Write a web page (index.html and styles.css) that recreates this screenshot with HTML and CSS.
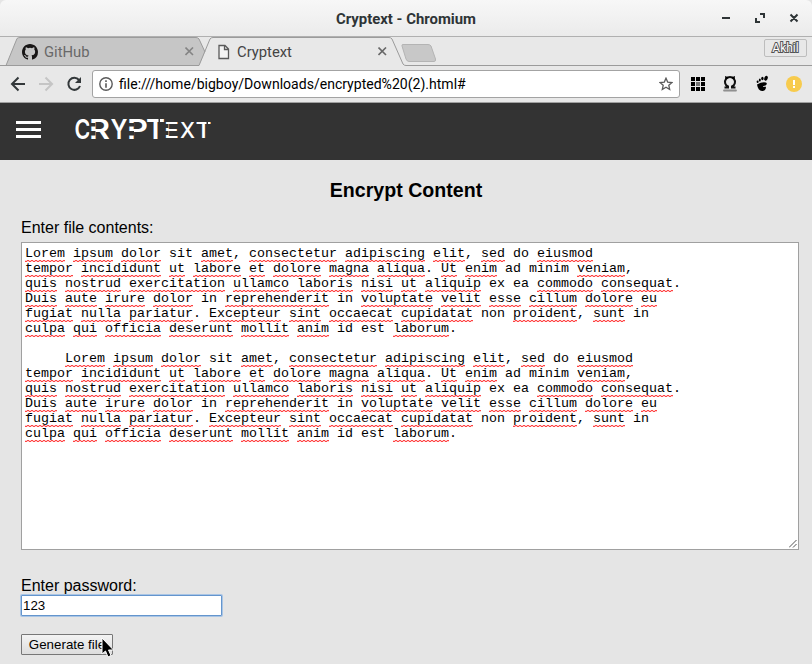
FILE: index.html
```html
<!DOCTYPE html>
<html lang="en">
<head>
<meta charset="utf-8">
<title>Cryptext</title>
<link rel="stylesheet" href="styles.css">
</head>
<body>
<div class="window">
  <header class="titlebar">
    <span class="title">Cryptext - Chromium</span>
    <svg class="controls" width="84" height="20" viewBox="0 0 84 20"><g fill="none" stroke="#2e3436" stroke-width="2"><path d="M4 10H12"/><path d="M38 10V14H42M42 6H46V10M72.500 6.500L79.500 13.500M79.500 6.500L72.500 13.500"/></g></svg>
  </header>
  <div class="tabs">
    <svg class="tabshape" width="812" height="29" viewBox="0 0 812 29"><path d="M6 28.500L17 1.500Q18 .5 20 .5H196Q198 .5 199 2L205 15L199 28.500Z" fill="#c6c6c6"/><path d="M0 28.500H6L17 1.500Q18 .5 20 .5H196Q198 .5 199 2L205 15M6 28.500H199L210 2Q211 .5 213 .5H389Q391 .5 392 2L403 27Q404 28.500 406 28.500H812" fill="none" stroke="#9b9b9b"/><path d="M403 7.5H428Q430 7.5 431 9L435.500 22Q436 24.500 434 24.500H409Q407 24.500 406 22L402 9Q401.500 7.500 403 7.500Z" fill="#c8c8c8" stroke="#b4b4b4"/></svg>
    <div class="tab tab-github">
      <svg class="favicon" width="16" height="16" viewBox="0 0 16 16"><path fill="#181616" d="M8 0C3.580 0 0 3.580 0 8c0 3.540 2.290 6.530 5.470 7.590.4.070.55-.17.55-.38v-1.490c-2.010.37-2.530-.49-2.690-.94-.09-.23-.48-.94-.82-1.130-.28-.15-.68-.52-.01-.53.63-.01 1.080.58 1.230.82.72 1.210 1.870.87 2.330.66.07-.52.28-.87.51-1.070-1.780-.2-3.640-.89-3.640-3.950 0-.87.310-1.590.82-2.150-.08-.2-.36-1.020.08-2.120 0 0 .67-.21 2.200.82a7.600 7.600 0 0 1 4 0c1.530-1.040 2.200-.82 2.200-.82.44 1.100.16 1.920.08 2.120.51.56.82 1.270.82 2.150 0 3.070-1.870 3.750-3.650 3.950.29.25.54.73.54 1.480v2.200c0 .21.15.46.55.38A8 8 0 0 0 16 8c0-4.420-3.580-8-8-8Z"/></svg>
      <span>GitHub</span><svg class="close" width="9" height="9" viewBox="0 0 9 9"><path d="M.5.5L8 8M8 .5L.5 8"/></svg>
    </div>
    <div class="tab tab-page">
      <svg class="favicon" width="12" height="16" viewBox="0 0 12 16"><path d="M1 1.500H7L10.500 5V14.500H1ZM6.500 1.500V5.500H10.500" fill="#f4f4f4" stroke="#5a5a5a" stroke-width="1.300"/></svg>
      <span>Cryptext</span><svg class="close dark" width="9" height="9" viewBox="0 0 9 9"><path d="M.5.5L8 8M8 .5L.5 8"/></svg>
    </div>
    <span class="profile">Akhil</span>
  </div>
  <div class="toolbar">
    <svg class="nav" width="92" height="36" viewBox="0 0 92 36"><g fill="none" stroke="#33383a" stroke-width="2"><path d="M25 18H12M18.500 11.500L12 18L18.500 24.500"/><path stroke="#c5c5c5" d="M39 18H52M45.500 11.500L52 18L45.500 24.500"/><path d="M79 14A6 6 0 1 0 80 20"/></g><path fill="#33383a" d="M81 11V17H75Z"/></svg>
    <div class="omnibox">
      <svg width="14" height="14" viewBox="0 0 14 14"><circle cx="7" cy="7" r="6.200" fill="none" stroke="#5a5a5a" stroke-width="1.400"/><path d="M6.200 3.300H7.800V5H6.200ZM6.200 6.200H7.800V10.700H6.200Z" fill="#5a5a5a"/></svg>
      <span class="url">file:///home/bigboy/Downloads/encrypted%20(2).html#</span>
      <svg class="star" width="14" height="14" viewBox="0 0 14 14"><path d="M7 1.200L8.700 5.100L13 5.500L9.800 8.300L10.700 12.500L7 10.300L3.300 12.500L4.200 8.300L1 5.500L5.300 5.100Z" fill="none" stroke="#5a5a5a" stroke-width="1.300"/></svg>
    </div>
    <svg class="extensions" width="132" height="36" viewBox="0 0 132 36"><path d="M11 11h4v4h-4zM16 11h4v4h-4zM21 11h4v4h-4zM11 16h4v4h-4zM21 16h4v4h-4zM11 21h4v4h-4zM16 21h4v4h-4zM21 21h4v4h-4z"/><path fill="#777" d="M16 16h4v4h-4z"/><path d="M44.500 21.500H48V20.500A5 5 0 1 1 52 20.500V21.500H55.500" fill="none" stroke="#111" stroke-width="2"/><path d="M45 10L49 11.500L45.500 14ZM55 10L51 11.500L54.500 14Z"/><path d="M43.500 24.500H56.500" stroke="#aaa" stroke-width="2.500"/><path d="M43.500 24.500H56.500" stroke="#777" stroke-dasharray="1 1"/><g><ellipse cx="86" cy="12.300" rx="1.700" ry="2.500" transform="rotate(25 86 12.300)"/><ellipse cx="82.400" cy="12.500" rx="1.200" ry="1.700"/><ellipse cx="79.800" cy="14" rx="1" ry="1.500"/><ellipse cx="77.600" cy="15.800" rx="1" ry="1.300"/><path d="M77 18.500Q82 15.500 86 16.500Q88 18 85.500 19.500Q82.500 20 83 21Q84.500 20.500 86 20.800Q86 25 82 25Q78 24.500 77 18.500Z"/></g><circle cx="114" cy="18" r="8" fill="#f7cb4d"/><path d="M113 14h2v5h-2zM113 20h2v2h-2z" fill="#fff"/></svg>
  </div>
  <nav class="appbar">
    <div class="menu"><i></i><i></i><i></i></div>
    <svg class="logo" width="144" height="32" viewBox="0 0 144 32">
      <g class="big"><text x="0.500" y="23" textLength="16" lengthAdjust="spacingAndGlyphs">C</text><text x="15" y="23" textLength="21" lengthAdjust="spacingAndGlyphs">R</text><text x="36.500" y="23" textLength="17" lengthAdjust="spacingAndGlyphs">Y</text><text x="53" y="23" textLength="21" lengthAdjust="spacingAndGlyphs">P</text><text x="72" y="23" textLength="19" lengthAdjust="spacingAndGlyphs">T</text></g>
      <g class="small"><text x="90" y="21.500" textLength="15" lengthAdjust="spacingAndGlyphs">E</text><text x="106" y="21.500" textLength="15" lengthAdjust="spacingAndGlyphs">X</text><text x="121.500" y="21.500" textLength="16" lengthAdjust="spacingAndGlyphs">T</text></g>
      <path fill="#333" d="M15.500 7h6v3.500h-6zM15.500 15h6v4.500h-6zM54 7h6v3.500h-6zM54 15h6v4.500h-6zM84.500 3h1.500v5h-1.500zM90 8h4.500v4h-4.500zM90 15h4.500v4h-4.500zM132.500 4h1.500v4h-1.500z"/>
    </svg>
  </nav>
  <main>
    <h1>Encrypt Content</h1>
    <div class="label">Enter file contents:</div>
    <div class="editor"><pre><u>Lorem</u> <u>ipsum</u> <u>dolor</u> sit <u>amet</u>, <u>consectetur</u> <u>adipiscing</u> <u>elit</u>, <u>sed</u> do <u>eiusmod</u>
<u>tempor</u> <u>incididunt</u> <u>ut</u> <u>labore</u> <u>et</u> <u>dolore</u> <u>magna</u> <u>aliqua</u>. <u>Ut</u> <u>enim</u> ad minim <u>veniam</u>,
<u>quis</u> <u>nostrud</u> <u>exercitation</u> <u>ullamco</u> <u>laboris</u> <u>nisi</u> <u>ut</u> <u>aliquip</u> ex ea <u>commodo</u> <u>consequat</u>.
<u>Duis</u> <u>aute</u> <u>irure</u> <u>dolor</u> in <u>reprehenderit</u> in <u>voluptate</u> <u>velit</u> <u>esse</u> <u>cillum</u> <u>dolore</u> <u>eu</u>
<u>fugiat</u> <u>nulla</u> <u>pariatur</u>. <u>Excepteur</u> <u>sint</u> <u>occaecat</u> <u>cupidatat</u> non <u>proident</u>, <u>sunt</u> in
<u>culpa</u> <u>qui</u> <u>officia</u> <u>deserunt</u> <u>mollit</u> <u>anim</u> id est <u>laborum</u>.

     <u>Lorem</u> <u>ipsum</u> <u>dolor</u> sit <u>amet</u>, <u>consectetur</u> <u>adipiscing</u> <u>elit</u>, <u>sed</u> do <u>eiusmod</u>
<u>tempor</u> <u>incididunt</u> <u>ut</u> <u>labore</u> <u>et</u> <u>dolore</u> <u>magna</u> <u>aliqua</u>. <u>Ut</u> <u>enim</u> ad minim <u>veniam</u>,
<u>quis</u> <u>nostrud</u> <u>exercitation</u> <u>ullamco</u> <u>laboris</u> <u>nisi</u> <u>ut</u> <u>aliquip</u> ex ea <u>commodo</u> <u>consequat</u>.
<u>Duis</u> <u>aute</u> <u>irure</u> <u>dolor</u> in <u>reprehenderit</u> in <u>voluptate</u> <u>velit</u> <u>esse</u> <u>cillum</u> <u>dolore</u> <u>eu</u>
<u>fugiat</u> <u>nulla</u> <u>pariatur</u>. <u>Excepteur</u> <u>sint</u> <u>occaecat</u> <u>cupidatat</u> non <u>proident</u>, <u>sunt</u> in
<u>culpa</u> <u>qui</u> <u>officia</u> <u>deserunt</u> <u>mollit</u> <u>anim</u> id est <u>laborum</u>.</pre>
      <svg class="grip" width="8" height="8" viewBox="0 0 8 8"><path d="M0 7.500L7.500 0M4 7.500L7.500 4" stroke="#555"/></svg>
    </div>
    <div class="label password-label">Enter password:</div>
    <input class="password" value="123">
    <div class="actions"><button>Generate file</button>
      <svg class="cursor" width="16" height="22" viewBox="0 0 16 22"><path d="M1 1V17L4.500 14L7 20L10 18.500L7.500 13H12.500Z" fill="#000" stroke="#fff"/></svg>
    </div>
  </main>
</div>
</body>
</html>
```
FILE: styles.css
```css
* { box-sizing: border-box; }
body { margin: 0; background: #e5e5e5; color: #000; font-family: "Liberation Sans", Arial, sans-serif; }
.window { width: 812px; height: 664px; overflow: hidden; }
svg { display: block; flex: none; }
.titlebar { position: relative; height: 37px; display: flex; align-items: center; justify-content: center; background: linear-gradient(#f7f7f7, #ebebeb); border-bottom: 1px solid #b0b0b0; border-radius: 6px 6px 0 0; }
.title { font: bold 14.9px/20px Roboto, sans-serif; color: #2e3436; padding-top: 2px; }
.controls { position: absolute; left: 718px; top: 8px; }
.tabs { position: relative; height: 29px; background: #e8e8e8; display: flex; font: 14.8px/28px Roboto, sans-serif; color: #444; }
.tabshape { position: absolute; left: 0; top: 0; }
.tab { position: relative; display: flex; align-items: center; }
.tab-github { width: 194px; padding-left: 22px; gap: 6px; color: #696969; }
.tab-page { width: 193px; padding-left: 24px; gap: 7px; }
.close { margin-left: auto; stroke: #848484; stroke-width: 1.6; }
.dark { stroke: #686868; }
.profile { position: relative; margin: 2px 5px 0 auto; width: 43px; height: 18px; border: 1px solid #bdbdbd; border-radius: 2px; font: 12px/17px Roboto, sans-serif; text-align: center; color: #fff; -webkit-text-stroke: 2px #555; paint-order: stroke fill; }
.toolbar { height: 37px; display: flex; background: #e8e8e8; border-bottom: 1px solid #a0a0a0; }
.omnibox { width: 588px; height: 28px; margin-top: 4px; border: 1px solid #a3a3a3; border-radius: 3px; background: #fff; display: flex; align-items: center; padding: 0 6px; gap: 6px; font: 14.06px/24px Roboto, sans-serif; }
.url { padding-bottom: 1px; }
.star { margin-left: auto; }
.appbar { height: 57px; background: #333; display: flex; padding: 0 16px; }
.menu { width: 25px; padding-top: 18px; display: flex; flex-direction: column; gap: 4px; }
.menu i { height: 3px; background: #fff; }
.logo { margin: 13px 0 0 33px; overflow: visible; fill: #fff; }
.big { font: 600 27px Inter, sans-serif; }
.small { font: 500 22px Inter, sans-serif; }
main { padding: 18px 13px 0 21px; }
h1 { margin: 0 8px 0 0; font-size: 19.6px; line-height: 24px; text-align: center; }
.label { margin-top: 17px; font-size: 16px; line-height: 18px; }
.editor { position: relative; height: 308px; margin-top: 5px; border: 1px solid #a0a0a0; background: #fff; padding: 3px; }
pre { margin: 0; font: 13.333px/15px "Liberation Mono", monospace; }
u { text-decoration: none; padding-bottom: 1px; background: linear-gradient(90deg, #f44 50%, #fcc 50%) 0 100% / 4px 1px repeat-x, linear-gradient(90deg, #fcc 50%, #f44 50%) 0 calc(100% - 1px) / 4px 1px repeat-x; }
.grip { position: absolute; right: 1px; bottom: 1px; }
.password-label { margin-top: 27px; }
.password { display: block; width: 201px; height: 21px; border: 1px solid #6495cd; box-shadow: 0 0 0 1px #a9c5e5; border-radius: 1px; padding: 0 1px; outline: 0; font: 13.333px "Liberation Sans", sans-serif; }
.actions { position: relative; margin-top: 18px; }
button { display: block; width: 92px; height: 21px; border: 1px solid #777; border-radius: 1px; padding: 0; background: linear-gradient(#f3f3f3, #ddd); font: 13.333px "Liberation Sans", sans-serif; white-space: nowrap; }
.cursor { position: absolute; left: 80px; top: 3px; }
```
